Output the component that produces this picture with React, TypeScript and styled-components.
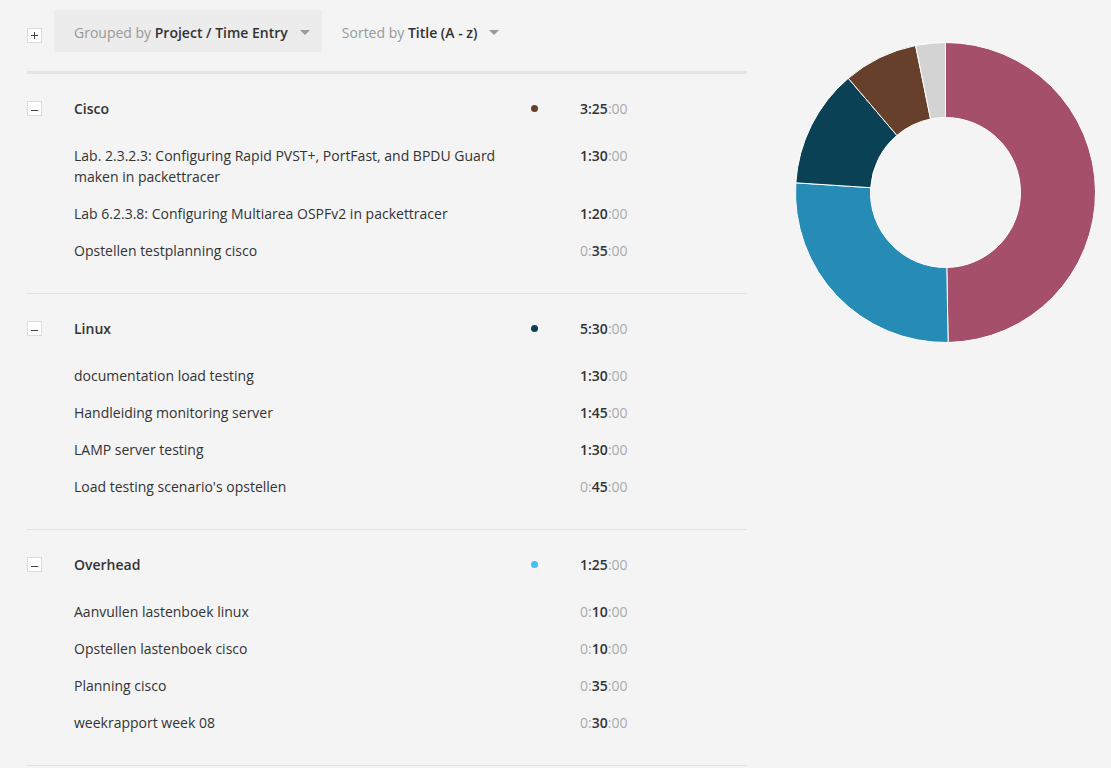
import React from "react";
import styled, { createGlobalStyle } from "styled-components";

const GlobalStyle = createGlobalStyle`
  html, body { margin: 0; padding: 0; background: #f4f4f4; }
  body { font-family: "Open Sans", "Liberation Sans", sans-serif; color: #333; font-size: 14px; }
`;

const Page = styled.div`
  display: flex;
  align-items: flex-start;
  padding-left: 27px;
  width: 1111px;
  height: 768px;
  box-sizing: border-box;
  overflow: hidden;
`;

const Left = styled.div`
  width: 720px;
  display: flex;
  flex-direction: column;
`;

const Toolbar = styled.div`
  display: flex;
  align-items: center;
  padding-top: 10px;
  height: 42px;
  margin-bottom: 19px;
`;

const ToggleBox = styled.div<{ $plus?: boolean }>`
  position: relative;
  width: 15px;
  height: 15px;
  box-sizing: border-box;
  border: 1px solid #dcdcdc;
  background: #fff;
  flex-shrink: 0;
  &::before {
    content: "";
    position: absolute;
    left: 3px;
    width: 7px;
    height: 1px;
    background: #444;
    top: ${(p) => (p.$plus ? "6px" : "8px")};
  }
  &::after {
    content: "";
    display: ${(p) => (p.$plus ? "block" : "none")};
    position: absolute;
    left: 6px;
    top: 3px;
    width: 1px;
    height: 7px;
    background: #444;
  }
`;

const ToolbarToggle = styled(ToggleBox)`
  margin: 8px 12px 0 0;
`;

const Dropdown = styled.div<{ $active?: boolean }>`
  display: flex;
  align-items: center;
  box-sizing: border-box;
  height: 42px;
  padding: 2px 12px 0 20px;
  background: ${(p) => (p.$active ? "#ececec" : "transparent")};
  font-size: 14px;
  white-space: nowrap;
`;

const Muted = styled.span`
  color: #999;
`;

const Strong = styled.span`
  color: #333;
  font-weight: 600;
`;

const Caret = styled.span`
  display: inline-block;
  width: 0;
  height: 0;
  margin-left: 12px;
  border-left: 5px solid transparent;
  border-right: 5px solid transparent;
  border-top: 5px solid #999;
`;

const ThickRule = styled.div`
  height: 3px;
  background: #e4e4e4;
`;

const Group = styled.section`
  padding: 16px 0 24px;
  border-bottom: 1px solid #e2e2e2;
`;

const HeaderRow = styled.div`
  display: flex;
  align-items: center;
  height: 37px;
  margin-bottom: 10px;
`;

const EntryRow = styled.div`
  display: flex;
  align-items: flex-start;
  padding: 8px 0 8px 47px;
  line-height: 21px;
`;

const HeaderTitle = styled.div`
  margin-left: 32px;
  width: 450px;
  font-weight: 600;
  line-height: 21px;
`;

const EntryTitle = styled.div`
  width: 450px;
  line-height: 21px;
`;

const DotCell = styled.div`
  width: 20px;
  display: flex;
  justify-content: center;
`;

const Dot = styled.span<{ $color: string }>`
  width: 7px;
  height: 7px;
  border-radius: 50%;
  background: ${(p) => p.$color};
`;

const Time = styled.div`
  margin-left: 36px;
  line-height: 21px;
  color: #aaa;
  white-space: nowrap;
`;

const TimeStrong = styled.span`
  color: #333;
  font-weight: 600;
`;

const ChartWrap = styled.div`
  margin-left: 48px;
  margin-top: 42px;
  width: 301px;
  height: 301px;
`;

type Entry = { title: string; h: number; m: number };
type GroupData = { name: string; color: string; h: number; m: number; entries: Entry[] };

const groups: GroupData[] = [
  {
    name: "Cisco",
    color: "#66402b",
    h: 3,
    m: 25,
    entries: [
      { title: "Lab. 2.3.2.3: Configuring Rapid PVST+, PortFast, and BPDU Guard maken in packettracer", h: 1, m: 30 },
      { title: "Lab 6.2.3.8: Configuring Multiarea OSPFv2 in packettracer", h: 1, m: 20 },
      { title: "Opstellen testplanning cisco", h: 0, m: 35 },
    ],
  },
  {
    name: "Linux",
    color: "#0b4155",
    h: 5,
    m: 30,
    entries: [
      { title: "documentation load testing", h: 1, m: 30 },
      { title: "Handleiding monitoring server", h: 1, m: 45 },
      { title: "LAMP server testing", h: 1, m: 30 },
      { title: "Load testing scenario's opstellen", h: 0, m: 45 },
    ],
  },
  {
    name: "Overhead",
    color: "#45bdfb",
    h: 1,
    m: 25,
    entries: [
      { title: "Aanvullen lastenboek linux", h: 0, m: 10 },
      { title: "Opstellen lastenboek cisco", h: 0, m: 10 },
      { title: "Planning cisco", h: 0, m: 35 },
      { title: "weekrapport week 08", h: 0, m: 30 },
    ],
  },
];

const pad = (n: number) => (n < 10 ? `0${n}` : `${n}`);

const Duration: React.FC<{ h: number; m: number }> = ({ h, m }) =>
  h > 0 ? (
    <Time>
      <TimeStrong>
        {h}:{pad(m)}
      </TimeStrong>
      :00
    </Time>
  ) : (
    <Time>
      0:<TimeStrong>{pad(m)}</TimeStrong>:00
    </Time>
  );

const slices = [
  { from: 0, to: 179, color: "#a54f6b" },
  { from: 179, to: 273.7, color: "#268cb6" },
  { from: 273.7, to: 319.6, color: "#0b4155" },
  { from: 319.6, to: 348.5, color: "#66402b" },
  { from: 348.5, to: 360, color: "#d3d3d3" },
];

const pt = (cx: number, cy: number, r: number, deg: number) => {
  const a = ((deg - 90) * Math.PI) / 180;
  return [cx + r * Math.cos(a), cy + r * Math.sin(a)];
};

const arcPath = (from: number, to: number, R: number, r: number, c: number) => {
  const large = to - from > 180 ? 1 : 0;
  const [x1, y1] = pt(c, c, R, from);
  const [x2, y2] = pt(c, c, R, to);
  const [x3, y3] = pt(c, c, r, to);
  const [x4, y4] = pt(c, c, r, from);
  return `M${x1} ${y1} A${R} ${R} 0 ${large} 1 ${x2} ${y2} L${x3} ${y3} A${r} ${r} 0 ${large} 0 ${x4} ${y4} Z`;
};

const Donut: React.FC = () => (
  <svg width="301" height="301" viewBox="0 0 301 301">
    {slices.map((s, i) => (
      <path key={i} d={arcPath(s.from, s.to, 150, 75, 150.5)} fill={s.color} stroke="#fff" strokeWidth={1} />
    ))}
  </svg>
);

export default function App() {
  return (
    <>
      <GlobalStyle />
      <Page>
        <Left>
          <Toolbar>
            <ToolbarToggle $plus />
            <Dropdown $active>
              <Muted>Grouped by&nbsp;</Muted>
              <Strong>Project / Time Entry</Strong>
              <Caret />
            </Dropdown>
            <Dropdown>
              <Muted>Sorted by&nbsp;</Muted>
              <Strong>Title (A - z)</Strong>
              <Caret />
            </Dropdown>
          </Toolbar>
          <ThickRule />
          {groups.map((g) => (
            <Group key={g.name}>
              <HeaderRow>
                <ToggleBox />
                <HeaderTitle>{g.name}</HeaderTitle>
                <DotCell>
                  <Dot $color={g.color} />
                </DotCell>
                <Duration h={g.h} m={g.m} />
              </HeaderRow>
              {g.entries.map((e) => (
                <EntryRow key={e.title}>
                  <EntryTitle>{e.title}</EntryTitle>
                  <DotCell />
                  <Duration h={e.h} m={e.m} />
                </EntryRow>
              ))}
            </Group>
          ))}
        </Left>
        <ChartWrap>
          <Donut />
        </ChartWrap>
      </Page>
    </>
  );
}
